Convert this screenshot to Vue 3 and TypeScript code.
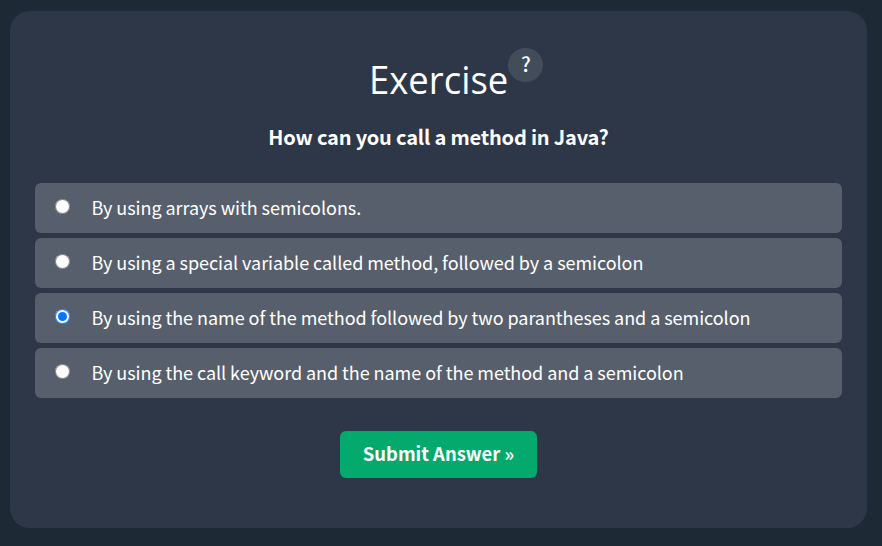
<script setup lang="ts">
import { ref } from 'vue'

const options: string[] = [
  'By using arrays with semicolons.',
  'By using a special variable called method, followed by a semicolon',
  'By using the name of the method followed by two parantheses and a semicolon',
  'By using the call keyword and the name of the method and a semicolon',
]
const selected = ref<number>(2)
</script>

<template>
  <main class="page">
    <form class="card" @submit.prevent>
      <h2 class="title">
        <span class="title-text">Exercise</span>
        <span class="help">?</span>
      </h2>
      <p class="question">How can you call a method in Java?</p>
      <div class="options">
        <label v-for="(option, i) in options" :key="i" class="option">
          <input v-model="selected" type="radio" name="answer" :value="i" />
          <span>{{ option }}</span>
        </label>
      </div>
      <button class="submit" type="submit">Submit Answer »</button>
    </form>
  </main>
</template>

<style>
body {
  margin: 0;
  background: #1d2a35;
}
</style>

<style scoped>
.page {
  box-sizing: border-box;
  height: 546px;
  padding: 11px 15px 18px 10px;
  background: #1d2a35;
  color: #fff;
  font-family: "Noto Sans CJK SC", "Noto Sans", sans-serif;
}
.card {
  box-sizing: border-box;
  height: 517px;
  padding: 37px 25px 0;
  border-radius: 20px;
  background: #2e3748;
  display: flex;
  flex-direction: column;
  align-items: center;
}
.title {
  display: flex;
  align-items: flex-start;
  height: 62px;
  margin: 0 0 0 35px;
  font-weight: 400;
}
.title-text {
  margin: 4px -9px 0 0;
  font-family: "Open Sans", "Noto Sans", sans-serif;
  font-size: 39px;
  line-height: 54px;
  transform: scaleX(0.935);
  transform-origin: left;
}
.help {
  width: 35px;
  height: 34px;
  border-radius: 50%;
  background: #434d5a;
  font-size: 20px;
  font-weight: 500;
  line-height: 31px;
  text-align: center;
}
.question {
  height: 34px;
  margin: 10px 0 29px;
  font-size: 20px;
  font-weight: 700;
  line-height: 34px;
  letter-spacing: -0.18px;
  white-space: nowrap;
}
.options {
  width: 100%;
  display: flex;
  flex-direction: column;
  gap: 5px;
}
.option {
  box-sizing: border-box;
  display: flex;
  height: 50px;
  padding-left: 20px;
  border-radius: 6px;
  background: #585f6c;
  font-size: 18px;
  line-height: 48px;
  letter-spacing: -0.05px;
  white-space: nowrap;
}
.option input {
  width: 15px;
  height: 15px;
  margin: 16px 21.5px 0 0;
}
.submit {
  width: 197px;
  height: 47px;
  margin: 33px 0 0;
  padding: 0 0 3px;
  border: 0;
  border-radius: 6px;
  background: #04aa6d;
  color: #fff;
  font: 700 18.4px/44px "Noto Sans CJK SC", "Noto Sans", sans-serif;
  white-space: nowrap;
}
</style>
